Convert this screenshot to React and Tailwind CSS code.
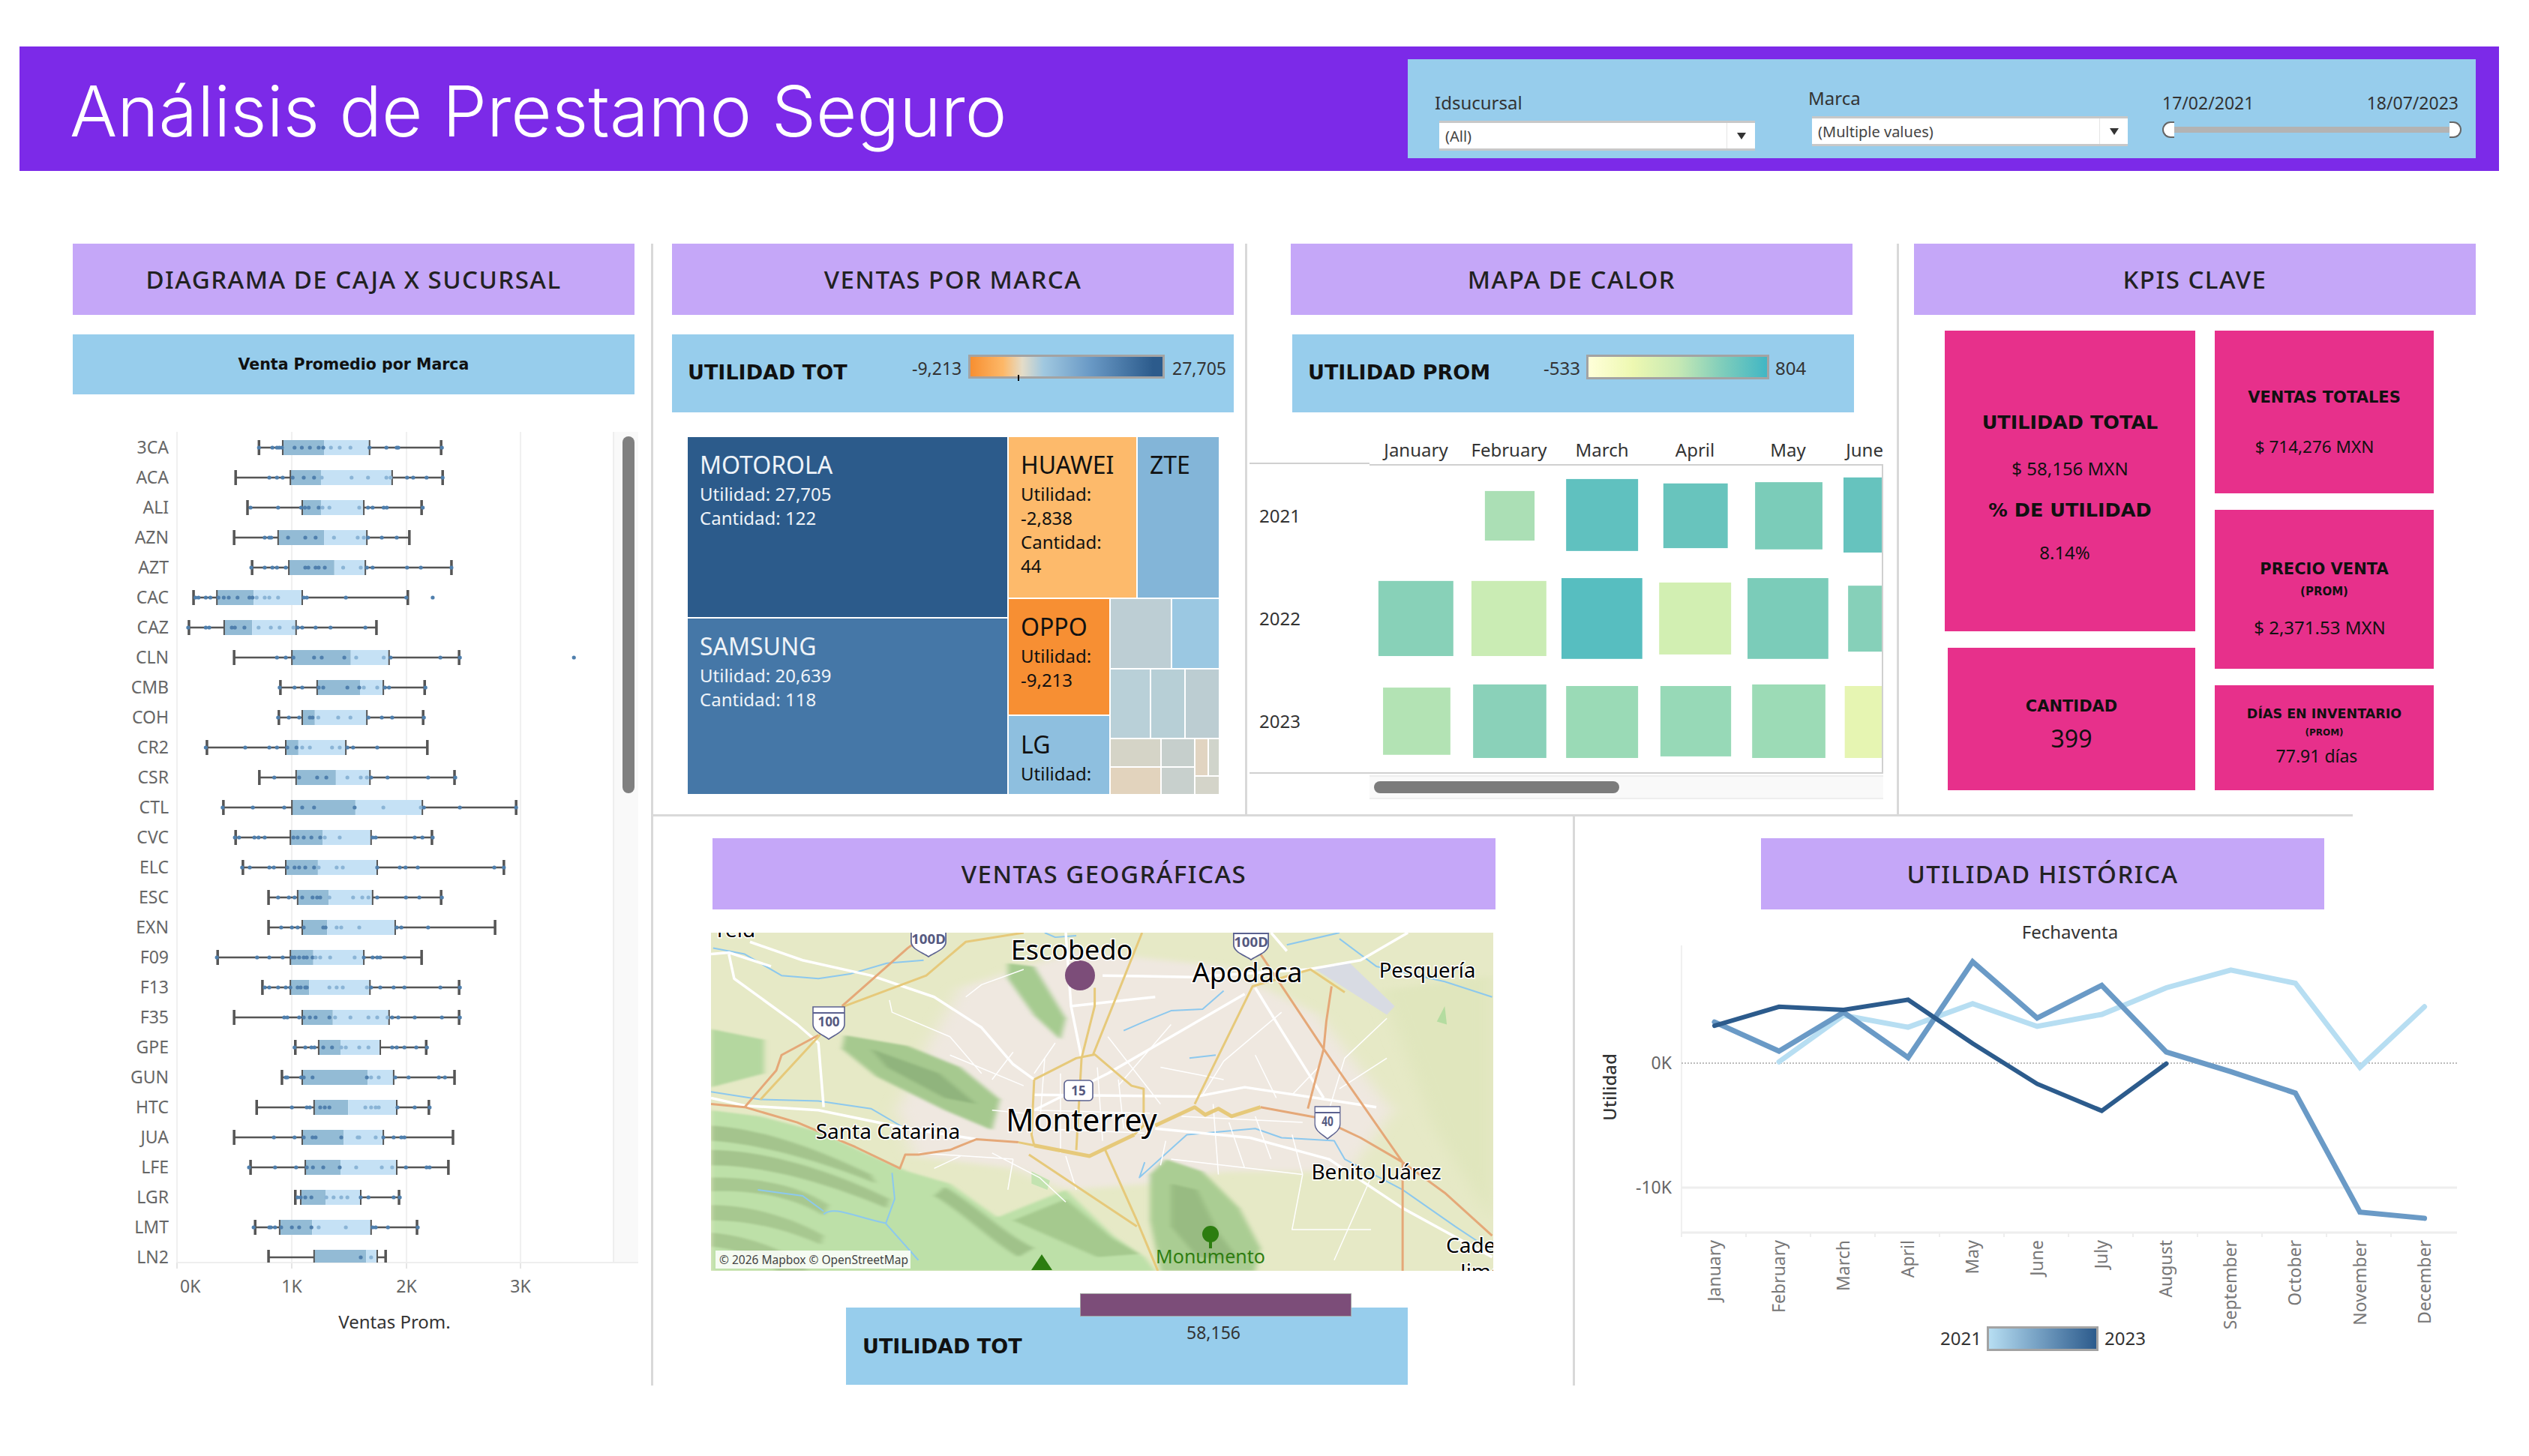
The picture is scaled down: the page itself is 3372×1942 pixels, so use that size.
const boxRows = [
	["3CA", 520, 582, 690, 809, 996, [520, 555, 567, 573, 580, 613, 632, 653, 676, 688, 708, 731, 759, 809, 853, 880, 884, 998]],
	["ACA", 459, 602, 682, 868, 1000, [547, 567, 582, 608, 637, 664, 684, 762, 805, 853, 864, 907, 923, 958, 1000]],
	["ALI", 490, 633, 682, 794, 945, [498, 570, 630, 640, 650, 676, 686, 704, 782, 805, 817, 846, 854, 948]],
	["AZN", 455, 570, 690, 802, 913, [535, 547, 552, 596, 641, 668, 716, 778, 794, 805, 841, 880]],
	["AZT", 502, 598, 717, 798, 1023, [500, 535, 555, 567, 590, 641, 649, 668, 676, 692, 740, 786, 802, 817, 907, 943, 1023]],
	["CAC", 349, 410, 506, 633, 909, [354, 362, 381, 393, 414, 428, 441, 464, 495, 503, 514, 535, 547, 570, 637, 645, 747, 905, 974]],
	["CAZ", 337, 429, 502, 617, 827, [335, 381, 390, 449, 457, 482, 519, 551, 574, 610, 621, 633, 668, 707, 798]],
	["CLN", 455, 606, 760, 860, 1043, [567, 590, 610, 664, 684, 743, 774, 846, 864, 994, 1045, 1343]],
	["CMB", 576, 672, 784, 845, 953, [574, 613, 633, 676, 688, 751, 782, 794, 829, 849, 860, 955]],
	["COH", 572, 633, 666, 802, 949, [570, 598, 625, 653, 660, 675, 727, 759, 806, 841, 868, 951]],
	["CR2", 384, 590, 623, 747, 960, [381, 484, 547, 567, 594, 618, 633, 653, 711, 731, 751, 766, 829]],
	["CSR", 521, 617, 721, 810, 1031, [560, 625, 672, 696, 751, 786, 802, 813, 856, 962, 1033]],
	["CTL", 427, 606, 772, 947, 1192, [425, 504, 586, 633, 664, 770, 845, 943, 951, 1045, 1192]],
	["CVC", 459, 602, 686, 813, 972, [457, 468, 508, 519, 535, 610, 621, 637, 657, 680, 692, 731, 817, 825, 927, 947, 974]],
	["ELC", 478, 590, 674, 829, 1160, [476, 496, 547, 559, 594, 613, 625, 641, 664, 676, 723, 739, 829, 888, 903, 935, 1135, 1160]],
	["ESC", 545, 621, 702, 817, 996, [570, 598, 613, 633, 660, 672, 680, 704, 766, 790, 806, 829, 904, 939, 998]],
	["EXN", 545, 633, 698, 876, 1137, [578, 606, 621, 637, 688, 694, 723, 735, 782, 880, 892, 962]],
	["F09", 412, 602, 662, 794, 945, [410, 515, 547, 582, 606, 613, 625, 637, 645, 660, 668, 680, 706, 770, 794, 817, 829, 837, 900]],
	["F13", 529, 602, 651, 810, 1043, [535, 547, 570, 590, 602, 621, 629, 641, 645, 704, 723, 739, 802, 813, 837, 872, 900, 994, 1045]],
	["F35", 455, 633, 713, 860, 1043, [586, 594, 625, 637, 653, 668, 704, 719, 759, 806, 829, 856, 868, 884, 927, 998, 1045]],
	["GPE", 615, 676, 733, 837, 957, [613, 641, 657, 665, 688, 711, 735, 747, 782, 806, 868, 880, 900, 931, 959]],
	["GUN", 580, 633, 804, 872, 1031, [590, 594, 630, 637, 660, 802, 813, 833, 876, 911, 990, 1006]],
	["HTC", 514, 664, 753, 880, 964, [606, 645, 653, 680, 692, 704, 798, 813, 825, 833, 882, 927, 966]],
	["JUA", 455, 633, 741, 845, 1027, [559, 613, 637, 660, 668, 735, 778, 782, 825, 845, 872, 892, 900]],
	["LFE", 498, 641, 733, 880, 1015, [494, 562, 617, 645, 661, 688, 731, 774, 841, 868, 904, 958, 966]],
	["LGR", 615, 629, 694, 786, 886, [621, 629, 641, 657, 696, 715, 735, 751, 786, 806, 872, 888]],
	["LMT", 510, 574, 659, 813, 933, [506, 547, 551, 562, 578, 606, 625, 657, 676, 747, 817, 825, 857, 935]],
	["LN2", 545, 664, 800, 829, 851, [786, 813]],
];

const heatCells = [
	[570, 688, 532, 689, "#abdfb5"],
	[763, 934, 494, 722, "#60c1bf"],
	[994, 1147, 508, 713, "#68c4bd"],
	[1212, 1372, 504, 717, "#7bccb9"],
	[1422, 1517, 489, 727, "#66c3be"],
	[317, 495, 817, 1055, "#88d1b8"],
	[538, 716, 817, 1055, "#caecb4"],
	[752, 944, 808, 1064, "#57bec0"],
	[984, 1155, 822, 1050, "#d2efb2"],
	[1194, 1386, 808, 1064, "#7bccb9"],
	[1433, 1517, 832, 1041, "#86d0b9"],
	[328, 488, 1155, 1368, "#b3e3b4"],
	[542, 716, 1145, 1378, "#8ad1b9"],
	[763, 934, 1150, 1378, "#9adab6"],
	[987, 1155, 1150, 1373, "#97d9b7"],
	[1205, 1379, 1145, 1378, "#9cdbb6"],
	[1425, 1517, 1150, 1378, "#e6f5b2"],
];

const months = ["January", "February", "March", "April", "May", "June", "July", "August", "September", "October", "November", "December"];

const lineX = (i) => 243 + i * 112.45;
const series = [
	{ color: "#b7def2", width: 7, start: 1, ys: [530, 378, 417, 340, 414, 375, 288, 230, 273, 548, 350] },
	{ color: "#6a9ac6", width: 7, start: 0, ys: [400, 495, 368, 516, 203, 387, 280, 498, 562, 632, 1021, 1041] },
	{ color: "#2c5b8c", width: 6, start: 0, ys: [412, 350, 360, 327, 470, 602, 690, 536] },
];

const SectionTitle = ({ children, className = "w-[749px]" }) => (
	<div className={`h-[95px] ${className} bg-[#c5a7f8] flex items-center justify-center shrink-0`}>
		<p className="text-[33px] font-medium tracking-[1.5px] text-[#222]">{children}</p>
	</div>
);

const BoldLabel = ({ children }) => (
	<p className="font-['DejaVu_Sans',sans-serif] font-bold text-[27px] leading-[34px] text-[#111]">{children}</p>
);

const Dropdown = ({ value }) => (
	<div className="h-10 bg-white border-y-[3px] border-[#c8c8c8] flex items-center">
		<p className="flex-1 pl-2 pt-[2px] text-[20px] text-[#444]">{value}</p>
		<div className="w-[38px] h-full border-l border-[#e5e5e5] flex items-center justify-center">
			<div className="w-0 h-0 border-x-[6px] border-x-transparent border-t-[9px] border-t-[#333]"></div>
		</div>
	</div>
);

const BoxPlot = () => {
	const X = (z) => z / 1.96 - 17;
	return (
		<svg width="754" height="1224" className="block">
			<defs>
				<clipPath id="plotClip">
					<rect x="139" y="0" width="582" height="1108" />
				</clipPath>
			</defs>
			<rect x="721" y="0" width="33" height="1108" fill="#f9f9f9" />
			<rect x="733" y="6" width="16" height="476" rx="8" fill="#808080" />
			{[139, 292, 445, 597].map((x) => (
				<g key={x}>
					<line x1={x} x2={x} y1="0" y2="1108" stroke="#f0f0f0" strokeWidth="2" />
					<line x1={x} x2={x} y1="1108" y2="1116" stroke="#e5e5e5" strokeWidth="2" />
				</g>
			))}
			<line x1="139" x2="754" y1="1108" y2="1108" stroke="#eeeeee" strokeWidth="2" />
			<line x1="721" x2="721" y1="0" y2="1108" stroke="#eeeeee" strokeWidth="2" />
			<g clipPath="url(#plotClip)">
				{boxRows.map(([name, lo, q1, med, q3, hi, dots], i) => {
					const y = 21 + i * 40;
					return (
						<g key={name}>
							<rect x={X(q1)} y={y - 10} width={X(med) - X(q1)} height="20" fill="#93bbd5" />
							<rect x={X(med)} y={y - 10} width={X(q3) - X(med)} height="20" fill="#c5e1f5" />
							<line x1={X(lo)} x2={X(q1)} y1={y} y2={y} stroke="#555" strokeWidth="2.5" />
							<line x1={X(q3)} x2={X(hi)} y1={y} y2={y} stroke="#555" strokeWidth="2.5" />
							<line x1={X(lo)} x2={X(lo)} y1={y - 10} y2={y + 10} stroke="#555" strokeWidth="3.5" />
							<line x1={X(hi)} x2={X(hi)} y1={y - 10} y2={y + 10} stroke="#555" strokeWidth="3.5" />
							<line x1={X(q1)} x2={X(q1)} y1={y - 10} y2={y + 10} stroke="#555" strokeWidth="2" />
							<line x1={X(q3)} x2={X(q3)} y1={y - 10} y2={y + 10} stroke="#555" strokeWidth="2" />
							{dots.map((d, j) => (
								<circle key={j} cx={X(d)} cy={y} r="2.6" fill={d > med && d < q3 ? "#8ab4d6" : "#4f7fad"} />
							))}
						</g>
					);
				})}
			</g>
			{boxRows.map(([name], i) => (
				<text key={name} x="128" y={21 + i * 40 + 8} textAnchor="end" fontSize="23" fill="#666">
					{name}
				</text>
			))}
			<text x="143" y="1148" fontSize="23" fill="#666">0K</text>
			<text x="292" y="1148" fontSize="23" fill="#666" textAnchor="middle">1K</text>
			<text x="445" y="1148" fontSize="23" fill="#666" textAnchor="middle">2K</text>
			<text x="597" y="1148" fontSize="23" fill="#666" textAnchor="middle">3K</text>
			<text x="429" y="1196" fontSize="24" fill="#333" textAnchor="middle">Ventas Prom.</text>
		</svg>
	);
};

const Cell = ({ className = "", children }) => <div className={className}>{children}</div>;

const Treemap = () => (
	<div className="flex gap-[2px] w-[708px] h-[476px] mt-[33px] ml-[21px] text-[24px] leading-[32px]">
		<div className="w-[426px] flex flex-col gap-[2px]">
			<div className="h-[240px] bg-[#2c5b8b] text-[#eef3f8] pl-4 pt-[21px]">
				<p className="text-[32px] mb-[7px]">MOTOROLA</p>
				<p>Utilidad: 27,705</p>
				<p>Cantidad: 122</p>
			</div>
			<div className="flex-1 bg-[#4577a7] text-[#eef3f8] pl-4 pt-[21px]">
				<p className="text-[32px] mb-[7px]">SAMSUNG</p>
				<p>Utilidad: 20,639</p>
				<p>Cantidad: 118</p>
			</div>
		</div>
		<div className="flex-1 flex flex-col gap-[2px] text-[#111]">
			<div className="h-[214px] flex gap-[2px]">
				<div className="w-[170px] bg-[#fdba6b] pl-4 pt-[21px]">
					<p className="text-[32px] mb-[7px]">HUAWEI</p>
					<p>Utilidad:</p>
					<p>-2,838</p>
					<p>Cantidad:</p>
					<p>44</p>
				</div>
				<div className="flex-1 bg-[#83b5d8] pl-4 pt-[21px]">
					<p className="text-[32px]">ZTE</p>
				</div>
			</div>
			<div className="flex-1 flex gap-[2px]">
				<div className="w-[134px] flex flex-col gap-[2px]">
					<div className="h-[154px] bg-[#f78f33] pl-4 pt-[21px]">
						<p className="text-[32px] mb-[7px]">OPPO</p>
						<p>Utilidad:</p>
						<p>-9,213</p>
					</div>
					<div className="flex-1 bg-[#8ebfdf] pl-4 pt-[22px] overflow-hidden">
						<p className="text-[32px] mb-[7px]">LG</p>
						<p>Utilidad:</p>
					</div>
				</div>
				<div className="flex-1 flex flex-col gap-[2px]">
					<div className="h-[92px] flex gap-[2px]">
						<Cell className="w-[80px] bg-[#bdced4]" />
						<Cell className="flex-1 bg-[#9bc8e2]" />
					</div>
					<div className="h-[91px] flex gap-[2px]">
						<Cell className="w-[52px] bg-[#b9d0d8]" />
						<Cell className="w-[44px] bg-[#b7cfd6]" />
						<Cell className="flex-1 bg-[#bccdd2]" />
					</div>
					<div className="flex-1 flex gap-[2px]">
						<div className="w-[66px] flex flex-col gap-[2px]">
							<Cell className="h-[36px] bg-[#d5d4c7]" />
							<Cell className="flex-1 bg-[#e2d3bd]" />
						</div>
						<div className="w-[43px] flex flex-col gap-[2px]">
							<Cell className="h-[36px] bg-[#c6cfcc]" />
							<Cell className="flex-1 bg-[#c8d0cd]" />
						</div>
						<div className="flex-1 flex flex-col gap-[2px]">
							<div className="h-[48px] flex gap-[2px]">
								<Cell className="w-[16px] bg-[#e1d4c1]" />
								<Cell className="flex-1 bg-[#d0d4cb]" />
							</div>
							<Cell className="flex-1 bg-[#d4d4c9]" />
						</div>
					</div>
				</div>
			</div>
		</div>
	</div>
);

const HeatMap = () => (
	<div className="mt-[30px] -ml-[55px] w-[845px] flex text-[24px] text-[#333]">
		<div className="w-[160px]">
			<div className="h-[39px] border-b-2 border-[#d0d0d0]"></div>
			<div className="border-b-2 border-[#d0d0d0]">
				{["2021", "2022", "2023"].map((y) => (
					<div key={y} className="h-[137px] flex items-center pl-[13px]">
						{y}
					</div>
				))}
			</div>
		</div>
		<div className="flex-1">
			<div className="h-[39px] flex items-center">
				{months.slice(0, 5).map((m) => (
					<p key={m} className="w-[124px] text-center">
						{m}
					</p>
				))}
				<p className="flex-1 text-right">June</p>
			</div>
			<div className="h-[413px] border-y-2 border-r-2 border-[#d0d0d0]">
				<svg width="683" height="409" className="block">
					{heatCells.map(([x1, x2, y1, y2, c], i) => (
						<rect
							key={i}
							x={x1 / 1.782 - 166}
							y={y1 / 2.376 - 190}
							width={(x2 - x1) / 1.782}
							height={(y2 - y1) / 2.376}
							fill={c}
						/>
					))}
				</svg>
			</div>
			<div className="h-[32px] mt-[2px] bg-[#f9f9f9] border-y-2 border-[#eeeeee] flex items-center pl-[6px]">
				<div className="w-[327px] h-4 rounded-lg bg-[#7b7b7b]"></div>
			</div>
		</div>
	</div>
);

const Kpis = () => (
	<div className="flex gap-[26px] mt-[21px] ml-[41px] text-[#111] text-[24px] leading-[30px] text-center">
		<div className="w-[334px] flex flex-col gap-[22px] items-end">
			<div className="w-[334px] h-[401px] bg-[#e7308b] pt-[107px]">
				<p className="font-['DejaVu_Sans',sans-serif] font-bold text-[25.5px]">UTILIDAD TOTAL</p>
				<p className="mt-[32px]">$ 58,156 MXN</p>
				<p className="mt-[25px] font-['DejaVu_Sans',sans-serif] font-bold text-[25.5px]">% DE UTILIDAD</p>
				<p className="mt-[27px] pr-[14px]">8.14%</p>
			</div>
			<div className="w-[330px] h-[190px] bg-[#e7308b] pt-[63px]">
				<p className="font-['DejaVu_Sans',sans-serif] font-bold text-[21px]">CANTIDAD</p>
				<p className="mt-[6px] text-[32px] leading-[44px]">399</p>
			</div>
		</div>
		<div className="w-[292px] flex flex-col gap-[22px]">
			<div className="h-[217px] bg-[#e7308b] pt-[74px]">
				<p className="font-['DejaVu_Sans',sans-serif] font-bold text-[21px]">VENTAS TOTALES</p>
				<p className="mt-[36px] pr-[26px] text-[22.5px]">$ 714,276 MXN</p>
			</div>
			<div className="h-[212px] bg-[#e7308b] pt-[64px]">
				<p className="font-['DejaVu_Sans',sans-serif] font-bold text-[21px]">PRECIO VENTA</p>
				<p className="mt-[5px] font-['DejaVu_Sans',sans-serif] font-bold text-[15px] leading-[20px]">(PROM)</p>
				<p className="mt-[23px] pr-[12px]">$ 2,371.53 MXN</p>
			</div>
			<div className="h-[140px] bg-[#e7308b] pt-[26px]">
				<p className="font-['DejaVu_Sans',sans-serif] font-bold text-[17.5px] leading-[24px]">DÍAS EN INVENTARIO</p>
				<p className="mt-[5px] font-['DejaVu_Sans',sans-serif] font-bold text-[12px] leading-[16px]">(PROM)</p>
				<p className="mt-[8px] pr-[20px] text-[23px]">77.91 días</p>
			</div>
		</div>
	</div>
);

const Shield = ({ x, y, label, w = 1 }) => (
	<g transform={`translate(${x},${y}) scale(${w},1)`}>
		<path d="M-21,-21 H21 V2 C21,12 8,16 0,22 C-8,16 -21,12 -21,2 Z" fill="#fff" stroke="#5b6190" strokeWidth="1.6" />
		<line x1="-21" x2="21" y1="-13" y2="-13" stroke="#5b6190" strokeWidth="2" />
		<text y="5" textAnchor="middle" fontSize="17" fontWeight="700" fill="#55597f">{label}</text>
	</g>
);

const R = ({ d, c = "#fff", w = 3 }) => (
	<path d={d} fill="none" stroke={c} strokeWidth={w} strokeLinejoin="round" vectorEffect="non-scaling-stroke" />
);

const mapLabel = "[paint-order:stroke] stroke-white stroke-[3px] fill-black";

const GeoMap = () => (
	<svg width="1043" height="451" className="block mt-[31px] -ml-[2px]">
		<defs>
			<filter id="soft" x="-5%" y="-5%" width="110%" height="110%">
				<feGaussianBlur stdDeviation="5 3" />
			</filter>
			<filter id="softer" x="-5%" y="-5%" width="110%" height="110%">
				<feGaussianBlur stdDeviation="16 9" />
			</filter>
		</defs>
		<rect width="1043" height="451" fill="#e6e9c6" />
		<g transform="scale(0.7018,0.4082) translate(-26,-60)">
			<g filter="url(#softer)">
				<path d="M500,240 L720,120 L1000,170 L1180,330 L1320,640 L1240,840 L1000,840 L860,880 L700,900 L600,830 L410,790 L380,640 L440,420 Z" fill="#efe8e0" />
				<path d="M1300,250 L1510,200 L1510,1000 L1400,700 Z" fill="#e0e6bd" />
			</g>
			<g filter="url(#soft)">
				<path d="M26,640 L120,660 L230,710 L320,780 L400,840 L480,880 L570,990 L700,900 L790,1050 L850,1120 L870,1165 L26,1165 Z" fill="#bde0a8" />
				<path d="M26,690 C120,700 220,760 330,850 L340,880 C240,810 120,750 26,740 Z" fill="#a4c48d" />
				<path d="M26,770 C130,770 260,840 365,930 L360,960 C250,880 130,820 26,820 Z" fill="#a4c48d" />
				<path d="M26,860 C110,860 190,880 250,950 L240,985 C180,920 100,900 26,905 Z" fill="#a7c890" />
				<path d="M26,950 C100,950 180,990 240,1050 L235,1080 C170,1030 100,1000 26,1000 Z" fill="#a7c890" />
				<path d="M26,1040 C90,1050 170,1090 210,1165 L150,1165 C120,1120 80,1095 26,1085 Z" fill="#a7c890" />
				<path d="M470,890 C530,950 580,1040 640,1090 L610,1120 C560,1070 500,970 450,920 Z" fill="#a0c28a" />
				<path d="M600,1000 L700,930 L790,1060 L840,1110 L760,1120 L680,1060 Z" fill="#a5c98e" />
				<path d="M26,375 L127,410 L127,520 L26,565 Z" fill="#b4d79f" />
				<path d="M280,395 L400,430 L500,500 L575,605 L560,705 L470,640 L340,530 L275,440 Z" fill="#a6c98f" />
				<path d="M330,440 L460,520 L530,620 L470,600 L360,500 Z" fill="#90b47d" />
				<path d="M590,160 L640,170 L700,340 L690,410 L640,330 L590,210 Z" fill="#a6cb90" />
				<path d="M860,850 L890,800 L960,840 L1030,960 L1070,1090 L1060,1165 L880,1165 L860,1000 Z" fill="#aacd93" />
				<path d="M900,880 L950,900 L990,1040 L1030,1130 L950,1120 L900,1020 Z" fill="#98bb82" />
			</g>
			<path d="M1170,175 L1240,160 L1325,300 L1310,328 Z" fill="#d8dbe3" />
			<path d="M1405,350 L1420,300 L1424,360 Z" fill="#b4dca0" />
			<path d="M635,840 L670,870 L665,900 L635,880 Z" fill="#c3e3b0" />
			<R c="#8cc8ee" w={2} d="M26,580 L120,605 L230,610 L330,635 L395,700 M370,845 L375,930 L358,1010 L420,1130 M240,980 C260,950 300,990 360,1010 M115,900 L200,920 L240,970 M30,110 L90,130 L160,200 L230,210 L290,195 L360,160 L430,150 M850,810 L840,860 L930,720 L1060,700 L1110,730 L1210,740 L1230,800 L1340,900 L1440,1020 L1510,1100 M850,350 L900,315 L960,310 L1000,250 M810,380 L850,350 M1120,100 L1220,60 M1220,80 L1290,170 L1420,220 L1510,270 M660,60 L680,75 L720,70 M935,470 L985,460" />
			<R w={1.5} d="M365,280 L370,320 L480,400 L540,520 M510,270 L540,230 L620,180 M600,450 L560,540 M680,420 L640,520 M900,360 L800,560 M1110,320 L1000,480 L960,590 M1180,500 L1130,590 M1310,340 L1230,470 L1200,640 M900,800 L1150,850 L1130,1030 L1280,1030 M1280,860 L1210,1130 M780,400 L880,620 M1060,460 L1100,600 M560,780 L650,860 L700,940 M500,790 L450,830 M890,740 L880,820 M980,620 L990,850 M660,470 L650,700 M690,520 L690,780 M760,500 L770,740 M800,540 L810,700 M640,640 L860,650 M640,700 L850,715 M880,500 L1000,540 M920,660 L1150,680 M1010,680 L1040,830 M1060,660 L1090,800 M560,640 L620,650 M480,460 L620,560 M420,780 L600,800 M600,800 L590,900 M700,790 L720,900 M1130,720 L1150,850 M1220,570 L1310,470" />
			<R w={3.5} d="M26,600 L90,625 L230,640 L400,700 L530,735 M100,90 L200,150 L330,200 L450,270 L540,370 L600,490 L640,540 M60,130 L70,210 L190,360 L230,420 L240,630 M26,130 L60,125 L140,170 M710,300 L870,270 M700,60 L710,300 L730,470 M770,200 L940,205 L1160,180 L1260,150 L1350,60 M1040,260 L780,520 L640,640 M640,590 L950,595 L1040,565 L1290,630 M870,700 L1050,730 L1200,800 L1340,960 L1510,1120 M1060,240 L1110,380 L1190,600 M1120,120 L1090,60" />
			<R c="#e5a878" w={3} d="M26,620 L90,630 L190,680 L300,760 L385,830 L395,785 L420,785 L480,770 L530,735 L610,745 M90,630 L150,510 L160,460 L230,395 M275,300 L400,110 M1070,130 L1190,440 L1340,810 L1340,1165 M1190,440 L1160,635 M1205,235 L1195,350 L1190,440 M1070,630 L1180,665 L1260,730 L1340,810 L1420,910 L1510,1050 M400,110 L440,60" />
			<R c="#e6c97a" w={3} d="M120,605 L230,400 L280,300 L435,200 L510,90 L620,60 M640,540 L720,470 L755,458 L825,560 L848,570 L848,690 L830,720 M640,755 L635,720 L640,540 M752,458 L845,60 M720,770 L730,470 L755,300 L755,240 M945,620 L1055,235 L1165,180 L1230,255 M775,770 L835,1000 L875,1165 M630,785 L835,1020 M610,745 L640,755" />
			<R c="#e6c97a" w={5} d="M640,755 L745,790 L830,720 M870,690 L945,630 L965,655 L990,635 L1015,660 L1070,630" />
		</g>
		<circle cx="492" cy="57" r="20" fill="#7c4d79" />
		<text x="481" y="36" textAnchor="middle" fontSize="36" className={mapLabel}>Escobedo</text>
		<text x="715" y="66" textAnchor="middle" fontSize="36" className={mapLabel}>Apodaca</text>
		<text x="955" y="60" textAnchor="middle" fontSize="27.5" className={mapLabel}>Pesquería</text>
		<text x="236" y="275" textAnchor="middle" fontSize="28" className={mapLabel}>Santa Catarina</text>
		<text x="494" y="265" textAnchor="middle" fontSize="41" className={mapLabel}>Monterrey</text>
		<text x="887" y="329" textAnchor="middle" fontSize="28" className={mapLabel}>Benito Juárez</text>
		<text x="980" y="427" fontSize="28" className={mapLabel}>Cade</text>
		<text x="999" y="462" fontSize="28" className={mapLabel}>Jimé</text>
		<text x="8" y="6" fontSize="28" className={mapLabel}>reld</text>
		<Shield x={157} y={120} label="100" />
		<Shield x={290} y={10} label="100D" w={1.1} />
		<Shield x={720} y={14} label="100D" w={1.1} />
		<Shield x={822} y={253} label="40" w={0.8} />
		<rect x="471" y="197" width="38" height="27" rx="5" fill="#fff" stroke="#5b6190" strokeWidth="1.6" />
		<text x="490" y="217" textAnchor="middle" fontSize="17" fontWeight="700" fill="#55597f">15</text>
		<circle cx="666" cy="402" r="11" fill="#2c7d10" />
		<rect x="664" y="408" width="4" height="13" fill="#2c7d10" />
		<path d="M441,429 L455,450 L427,450 Z" fill="#2c7d10" />
		<text x="666" y="441" textAnchor="middle" fontSize="25" fill="#2e7d10">Monumento</text>
		<text x="666" y="470" textAnchor="middle" fontSize="25" fill="#2e7d10">Natural Cerro</text>
		<text x="441" y="470" textAnchor="middle" fontSize="25" fill="#2e7d10">Cumbres de</text>
		<rect x="6" y="424" width="260" height="24" fill="#fff" opacity="0.85" />
		<text x="11" y="442" fontSize="15.5" fill="#444">© 2026 Mapbox © OpenStreetMap</text>
	</svg>
);

const LineChart = () => (
	<svg width="1200" height="567" className="block">
		<text x="660" y="39" textAnchor="middle" fontSize="24" fill="#333">Fechaventa</text>
		<line x1="142" x2="142" y1="48" y2="431" stroke="#f0f0f0" strokeWidth="2" />
		<line x1="142" x2="1176" y1="371" y2="371" stroke="#eeeeee" strokeWidth="3" />
		<line x1="142" x2="1176" y1="205" y2="205" stroke="#bbbbbb" strokeWidth="2" strokeDasharray="2 2" />
		<line x1="142" x2="1176" y1="431" y2="431" stroke="#eeeeee" strokeWidth="3" />
		{months.map((m, i) => (
			<line key={m} x1={142 + i * 86} x2={142 + i * 86} y1="431" y2="437" stroke="#eeeeee" strokeWidth="2" />
		))}
		<g transform="scale(0.7653,0.4082) translate(0,-32)">
			{series.map((s) => (
				<polyline
					key={s.color}
					points={s.ys.map((y, i) => `${lineX(i + s.start)},${y}`).join(" ")}
					fill="none"
					stroke={s.color}
					strokeWidth={s.width}
					strokeLinejoin="miter"
					strokeLinecap="round"
					vectorEffect="non-scaling-stroke"
				/>
			))}
		</g>
		<text x="129" y="213" textAnchor="end" fontSize="23" fill="#666">0K</text>
		<text x="129" y="379" textAnchor="end" fontSize="23" fill="#666">-10K</text>
		<text transform="translate(55,237) rotate(-90)" textAnchor="middle" fontSize="24" fontWeight="500" fill="#333">Utilidad</text>
		{months.map((m, i) => (
			<text
				key={m}
				transform={`translate(${lineX(i) * 0.7653 + 8},441) rotate(-90)`}
				textAnchor="end"
				fontSize="23"
				fill="#777"
			>
				{m}
			</text>
		))}
	</svg>
);

export default function App() {
	return (
		<div className="w-[3372px] h-[1942px] bg-white overflow-hidden pt-[62px] font-['Noto_Sans',sans-serif]">
			<header className="ml-[26px] w-[3306px] h-[166px] bg-[#7c2ae8] flex items-center justify-between pl-[67px] pr-[31px]">
				<h1 className="font-['Inter',sans-serif] font-light text-[94px] text-white leading-none pt-[6px]">Análisis de Prestamo Seguro</h1>
				<div className="w-[1424px] h-[132px] bg-[#97cdec] flex text-[24px] text-[#333] pl-[36px]">
					<div className="w-[427px] pt-[43px]">
						<p className="leading-[30px]">Idsucursal</p>
						<div className="mt-[9px] ml-[6px]">
							<Dropdown value="(All)" />
						</div>
					</div>
					<div className="w-[426px] ml-[71px] pt-[37px]">
						<p className="leading-[30px]">Marca</p>
						<div className="mt-[9px] ml-[5px]">
							<Dropdown value="(Multiple values)" />
						</div>
					</div>
					<div className="w-[399px] ml-[46px] pt-[43px]">
						<div className="flex justify-between leading-[30px] text-[23px] pr-[4px]">
							<p>17/02/2021</p>
							<p>18/07/2023</p>
						</div>
						<div className="flex items-center mt-[10px]">
							<div className="w-4 h-[22px] bg-white border-2 border-r-0 border-[#666] rounded-l-full"></div>
							<div className="flex-1 h-2 bg-[#b3b3b3]"></div>
							<div className="w-4 h-[22px] bg-white border-2 border-l-0 border-[#666] rounded-r-full"></div>
						</div>
					</div>
				</div>
			</header>

			<main className="flex mt-[97px]">
				<section className="w-[868px] pl-[97px] shrink-0">
					<SectionTitle>DIAGRAMA DE CAJA X SUCURSAL</SectionTitle>
					<div className="mt-[26px] w-[749px] h-[80px] bg-[#97cdec] flex items-center justify-center">
						<p className="font-['DejaVu_Sans',sans-serif] font-bold text-[20.5px] text-[#111]">Venta Promedio por Marca</p>
					</div>
					<div className="mt-[50px]">
						<BoxPlot />
					</div>
				</section>

				<div className="border-l-[3px] border-[#d9d9d9] h-[1523px] flex flex-col">
					<div className="flex h-[761px]">
						<section className="w-[792px] border-r-[3px] border-[#d9d9d9] pl-[25px]">
							<SectionTitle>VENTAS POR MARCA</SectionTitle>
							<div className="mt-[26px] w-[749px] h-[104px] bg-[#97cdec] flex pl-[21px] pr-[10px] pt-[27px] text-[23px] text-[#333]">
								<div className="w-[319px] pt-[7px]">
									<BoldLabel>UTILIDAD TOT</BoldLabel>
								</div>
								<p className="w-[49px] text-right whitespace-nowrap flex justify-end leading-[36px]">-9,213</p>
								<div className="ml-[9px] w-[264px] h-[32px] border-[3px] border-[#a3a3a3] bg-[linear-gradient(90deg,#f78f31,#fdb868_17%,#e4dcc8_27%,#a0c8e0_38%,#6a9ac6_62%,#2c5b8c_95%)] relative">
									<div className="absolute left-[63px] top-[24px] w-[2px] h-[8px] bg-black"></div>
								</div>
								<p className="ml-[10px] leading-[36px]">27,705</p>
							</div>
							<Treemap />
						</section>

						<section className="w-[869px] border-r-[3px] border-[#d9d9d9] pl-[58px]">
							<SectionTitle>MAPA DE CALOR</SectionTitle>
							<div className="mt-[26px] ml-[2px] w-[749px] h-[104px] bg-[#97cdec] flex pl-[21px] pt-[27px] text-[24px] text-[#333]">
								<div className="w-[310px] pt-[7px]">
									<BoldLabel>UTILIDAD PROM</BoldLabel>
								</div>
								<p className="w-[53px] text-right leading-[36px]">-533</p>
								<div className="ml-[8px] w-[244px] h-[33px] border-[3px] border-[#a3a3a3] bg-[linear-gradient(90deg,#ffffd9,#edf8b1_25%,#c7e9b4_50%,#7fcdbb_75%,#41b6c4)]"></div>
								<p className="ml-[8px] leading-[36px]">804</p>
							</div>
							<HeatMap />
						</section>

						<section className="pl-[20px]">
							<SectionTitle>KPIS CLAVE</SectionTitle>
							<Kpis />
						</section>
					</div>

					<div className="h-[3px] w-[2266px] bg-[#d9d9d9]"></div>

					<div className="flex flex-1">
						<section className="w-[1229px] border-r-[3px] border-[#d9d9d9] pl-[79px] pt-[29px]">
							<SectionTitle className="w-[1044px]">VENTAS GEOGRÁFICAS</SectionTitle>
							<GeoMap />
							<div className="relative mt-[49px] ml-[178px] w-[749px] h-[103px] bg-[#97cdec] flex pl-[22px] pt-[35px]">
								<BoldLabel>UTILIDAD TOT</BoldLabel>
								<div className="absolute left-[312px] -top-[19px] w-[362px] h-[31px] bg-[#7c4d79] border border-[#a3a3a3]"></div>
								<p className="absolute left-[454px] top-[16px] text-[23px] text-[#333]">58,156</p>
							</div>
						</section>
						<section className="pt-[29px]">
							<SectionTitle className="w-[751px] ml-[248px]">UTILIDAD HISTÓRICA</SectionTitle>
							<LineChart />
							<div className="flex items-center -mt-[13px] ml-[484px] text-[24px] text-[#333]">
								<p className="w-[58px] text-right">2021</p>
								<div className="ml-[7px] w-[149px] h-[33px] border-[3px] border-[#a3a3a3] bg-linear-to-r from-[#b7def2] to-[#2c5b8c]"></div>
								<p className="ml-[8px]">2023</p>
							</div>
						</section>
					</div>
				</div>
			</main>
		</div>
	);
}
